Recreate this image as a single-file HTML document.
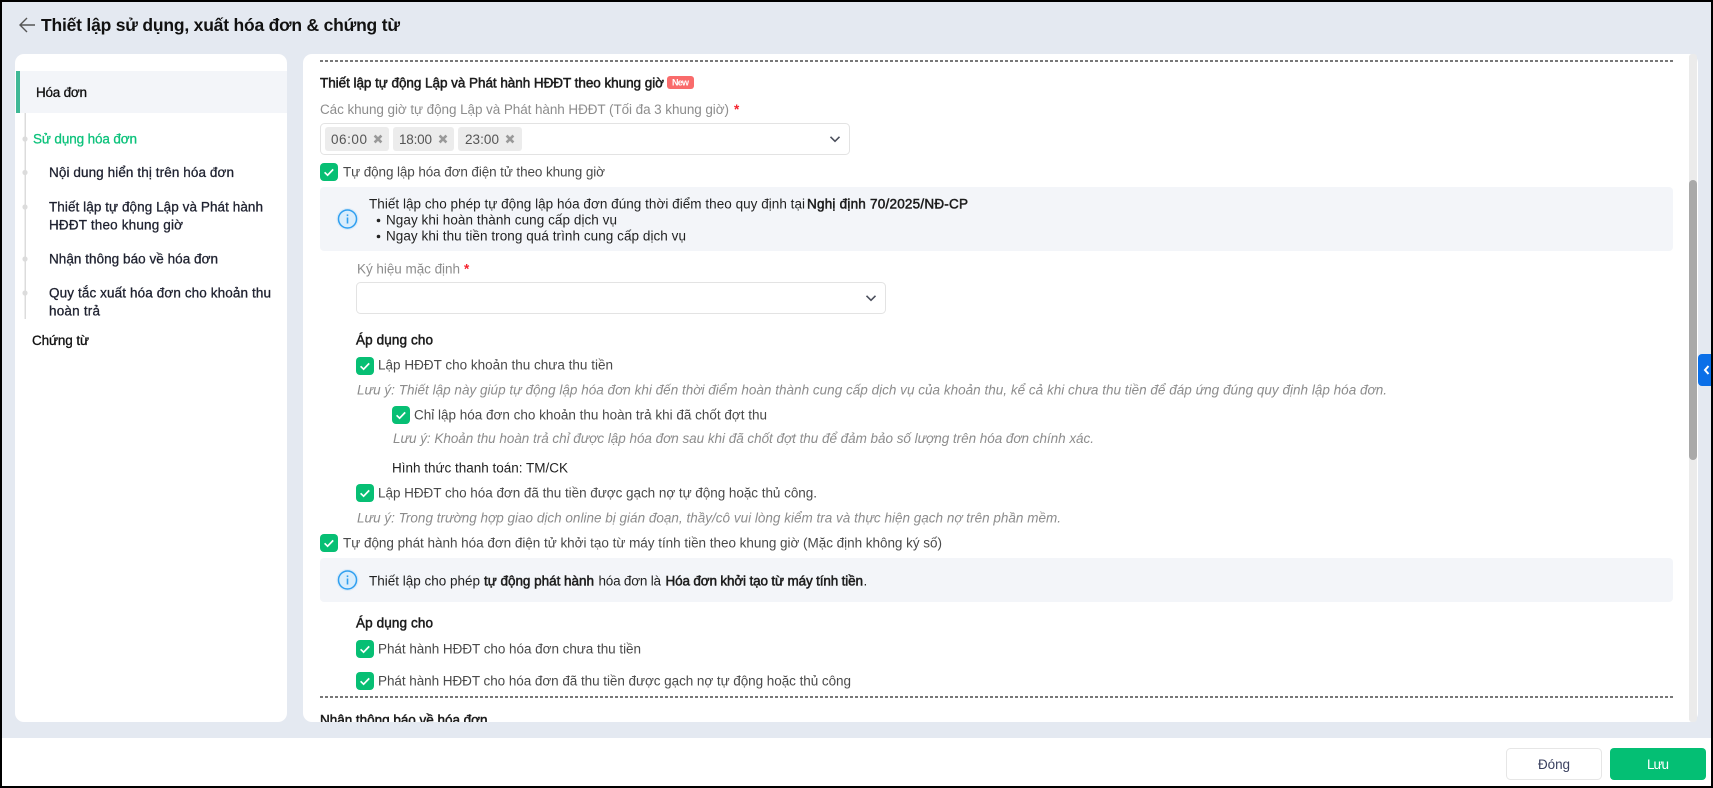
<!DOCTYPE html>
<html lang="vi"><head><meta charset="utf-8"><title>Thiết lập sử dụng, xuất hóa đơn &amp; chứng từ</title>
<style>
html,body{margin:0;padding:0;width:1713px;height:788px;overflow:hidden;background:#000}
svg{display:block}
text{font-family:"Liberation Sans",sans-serif;font-size:13.5px;fill:#4a4a4a}
.m{fill:#1f2230;stroke:#1f2230;stroke-width:.3px}
.b{fill:#1c1c1c;stroke:#1c1c1c;stroke-width:.5px}
.t{font-weight:700;font-size:17.5px;fill:#111}
.n{font-style:italic;fill:#8c8c8c}
.g{fill:#8d8d8d}
.d{fill:#222}
.r{fill:#f5222d;font-weight:700}
</style></head><body>
<svg width="1713" height="788" viewBox="0 0 1713 788" xmlns="http://www.w3.org/2000/svg">
<defs>
<g id="cb"><rect width="18" height="18" rx="4" fill="#07bf74"/><path d="M4.6 9.3L7.6 12.2L13.2 6.4" fill="none" stroke="#fff" stroke-width="1.7"/></g>
<g id="x"><path d="M-3.4-3.4L3.4 3.4M3.4-3.4L-3.4 3.4" stroke="#999" stroke-width="2.6" fill="none"/></g>
<g id="ch"><path d="M-4.5-2.2L0 2.3L4.5-2.2" fill="none" stroke="#4b4f5c" stroke-width="1.6"/></g>
<g id="inf"><circle r="11" fill="#dcebf8"/><circle r="9" fill="#d9edfc" stroke="#2f9ff0" stroke-width="1.5"/><rect x="-.8" y="-1.5" width="1.6" height="6" fill="#2f9ff0"/><rect x="-.8" y="-4.6" width="1.6" height="1.7" fill="#2f9ff0"/></g>
<clipPath id="card"><rect x="303" y="54" width="1395" height="668"/></clipPath>
</defs>

<rect x="2" y="2" width="1709" height="784" fill="#e4e9f1"/>
<rect x="2" y="738" width="1709" height="48" fill="#fff"/>

<!-- header -->
<path d="M35 25H20.2M27 18L20 25L27 32" fill="none" stroke="#555" stroke-width="1.4"/>
<text x="41" y="31" class="t" textLength="359">Thiết lập sử dụng, xuất hóa đơn &amp; chứng từ</text>

<!-- left card -->
<rect x="15" y="54" width="272" height="668" rx="9" fill="#fff"/>
<rect x="16" y="71" width="271" height="42" fill="#f3f5f9"/>
<rect x="16" y="71" width="4" height="42" fill="#3fb896"/>
<text x="36" y="97" class="m" style="fill:#111;stroke:#111" textLength="51">Hóa đơn</text>
<rect x="24.500" y="113" width="1.5" height="206" fill="#dcdcdc"/>
<g fill="#dcdcdc"><circle cx="25" cy="139" r="2.6"/><circle cx="25" cy="172.500" r="2.6"/><circle cx="25" cy="207" r="2.6"/><circle cx="25" cy="259" r="2.6"/><circle cx="25" cy="293" r="2.6"/></g>
<text x="33" y="143.500" class="m" style="fill:#0cc27b;stroke:#0cc27b" textLength="104">Sử dụng hóa đơn</text>
<text x="49" y="177" class="m" textLength="185">Nội dung hiển thị trên hóa đơn</text>
<text x="49" y="211.500" class="m" textLength="214">Thiết lập tự động Lập và Phát hành</text>
<text x="49" y="229.500" class="m" textLength="134">HĐĐT theo khung giờ</text>
<text x="49" y="263.500" class="m" textLength="169">Nhận thông báo về hóa đơn</text>
<text x="49" y="297.500" class="m" textLength="222">Quy tắc xuất hóa đơn cho khoản thu</text>
<text x="49" y="315.500" class="m" textLength="51">hoàn trả</text>
<text x="32" y="345" class="m" style="fill:#111;stroke:#111" textLength="57">Chứng từ</text>

<!-- right card -->
<rect x="303" y="54" width="1395" height="668" rx="9" fill="#fff"/>
<rect x="1689" y="54" width="8" height="668" rx="3" fill="#ebebeb"/>
<rect x="1689" y="180" width="8" height="280" rx="4" fill="#a9a9a9"/>
<path d="M320 61H1673" stroke="#777" stroke-width="2" stroke-dasharray="3 2" fill="none"/>

<text x="320" y="87.500" class="b" textLength="344">Thiết lập tự động Lập và Phát hành HĐĐT theo khung giờ</text>
<rect x="667" y="76" width="27" height="13" rx="3" fill="#f96b6b"/>
<text x="672" y="85.500" style="font-size:9px;font-weight:700;fill:#fff" textLength="17">New</text>

<text x="320" y="114" class="g" textLength="409">Các khung giờ tự động Lập và Phát hành HĐĐT (Tối đa 3 khung giờ)</text>
<text x="734" y="114" class="r">*</text>

<rect x="320.500" y="123.500" width="529" height="31" rx="4" fill="#fff" stroke="#e3e3e3"/>
<rect x="325" y="127" width="64" height="24" rx="3" fill="#ececec"/>
<rect x="393" y="127" width="61" height="24" rx="3" fill="#ececec"/>
<rect x="458" y="127" width="64" height="24" rx="3" fill="#ececec"/>
<text x="331" y="144" style="fill:#555" textLength="36">06:00</text>
<text x="399" y="144" style="fill:#555" textLength="33">18:00</text>
<text x="465" y="144" style="fill:#555" textLength="34">23:00</text>
<use href="#x" x="378" y="139"/><use href="#x" x="443" y="139"/><use href="#x" x="510" y="139"/>
<use href="#ch" x="835" y="139"/>

<use href="#cb" x="320" y="163"/>
<text x="343" y="176.500" textLength="262">Tự động lập hóa đơn điện tử theo khung giờ</text>

<rect x="320" y="187" width="1353" height="64" rx="4" fill="#f3f5f9"/>
<use href="#inf" x="347.500" y="219"/>
<text x="369" y="208.500" class="d" textLength="436">Thiết lập cho phép tự động lập hóa đơn đúng thời điểm theo quy định tại</text>
<text x="807" y="208.500" class="b" textLength="161">Nghị định 70/2025/NĐ-CP</text>
<circle cx="378.500" cy="220.500" r="1.8" fill="#222"/>
<circle cx="378.500" cy="236.500" r="1.8" fill="#222"/>
<text x="386" y="224.500" class="d" textLength="231">Ngay khi hoàn thành cung cấp dịch vụ</text>
<text x="386" y="240.500" class="d" textLength="300">Ngay khi thu tiền trong quá trình cung cấp dịch vụ</text>

<text x="357" y="273.500" class="g" textLength="103">Ký hiệu mặc định</text>
<text x="464" y="273.500" class="r">*</text>
<rect x="356.500" y="282.500" width="529" height="31" rx="4" fill="#fff" stroke="#e3e3e3"/>
<use href="#ch" x="871" y="298"/>

<text x="356" y="344.500" class="b" textLength="77">Áp dụng cho</text>
<use href="#cb" x="356" y="357"/>
<text x="378" y="369.500" textLength="235">Lập HĐĐT cho khoản thu chưa thu tiền</text>
<text x="357" y="394.500" class="n" textLength="1030">Lưu ý: Thiết lập này giúp tự động lập hóa đơn khi đến thời điểm hoàn thành cung cấp dịch vụ của khoản thu, kể cả khi chưa thu tiền để đáp ứng đúng quy định lập hóa đơn.</text>
<use href="#cb" x="392" y="406"/>
<text x="414" y="419.500" textLength="353">Chỉ lập hóa đơn cho khoản thu hoàn trả khi đã chốt đợt thu</text>
<text x="393" y="443" class="n" textLength="701">Lưu ý: Khoản thu hoàn trả chỉ được lập hóa đơn sau khi đã chốt đợt thu để đảm bảo số lượng trên hóa đơn chính xác.</text>
<text x="392" y="472.500" class="d" textLength="176">Hình thức thanh toán: TM/CK</text>
<use href="#cb" x="356" y="484"/>
<text x="378" y="497.500" textLength="439">Lập HĐĐT cho hóa đơn đã thu tiền được gạch nợ tự động hoặc thủ công.</text>
<text x="357" y="522.500" class="n" textLength="704">Lưu ý: Trong trường hợp giao dịch online bị gián đoạn, thầy/cô vui lòng kiểm tra và thực hiện gạch nợ trên phần mềm.</text>
<use href="#cb" x="320" y="534"/>
<text x="343" y="547.500" textLength="599">Tự động phát hành hóa đơn điện tử khởi tạo từ máy tính tiền theo khung giờ (Mặc định không ký số)</text>

<rect x="320" y="558" width="1353" height="44" rx="4" fill="#f3f5f9"/>
<use href="#inf" x="347.500" y="580"/>
<text x="369" y="585.500" class="d" textLength="111">Thiết lập cho phép</text>
<text x="484" y="585.500" class="b" textLength="110">tự động phát hành</text>
<text x="598.500" y="585.500" class="d" textLength="62.500">hóa đơn là</text>
<text x="665.500" y="585.500" class="b" textLength="197.500">Hóa đơn khởi tạo từ máy tính tiền</text>
<text x="863.500" y="585.500" class="d">.</text>

<text x="356" y="627.500" class="b" textLength="77">Áp dụng cho</text>
<use href="#cb" x="356" y="640"/>
<text x="378" y="653.500" textLength="263">Phát hành HĐĐT cho hóa đơn chưa thu tiền</text>
<use href="#cb" x="356" y="672"/>
<text x="378" y="685.500" textLength="473">Phát hành HĐĐT cho hóa đơn đã thu tiền được gạch nợ tự động hoặc thủ công</text>
<path d="M320 697H1673" stroke="#777" stroke-width="2" stroke-dasharray="3 2" fill="none"/>
<g clip-path="url(#card)"><text x="320" y="724.500" class="b" textLength="167.500">Nhận thông báo về hóa đơn</text></g>

<!-- side handle -->
<path d="M1711 354H1702a4 4 0 0 0-4 4V382a4 4 0 0 0 4 4H1711Z" fill="#0a6fe8"/>
<path d="M1708.500 366L1705 370L1708.500 374" fill="none" stroke="#fff" stroke-width="2"/>

<!-- footer -->
<rect x="1506.500" y="748.500" width="95" height="31" rx="4" fill="#fff" stroke="#e6e6e6"/>
<text x="1538" y="769" style="fill:#3b4160" textLength="32">Đóng</text>
<rect x="1610" y="748" width="96" height="32" rx="4" fill="#04bf74"/>
<text x="1647" y="769" style="fill:#fff" textLength="22">Lưu</text>
</svg>
</body></html>
